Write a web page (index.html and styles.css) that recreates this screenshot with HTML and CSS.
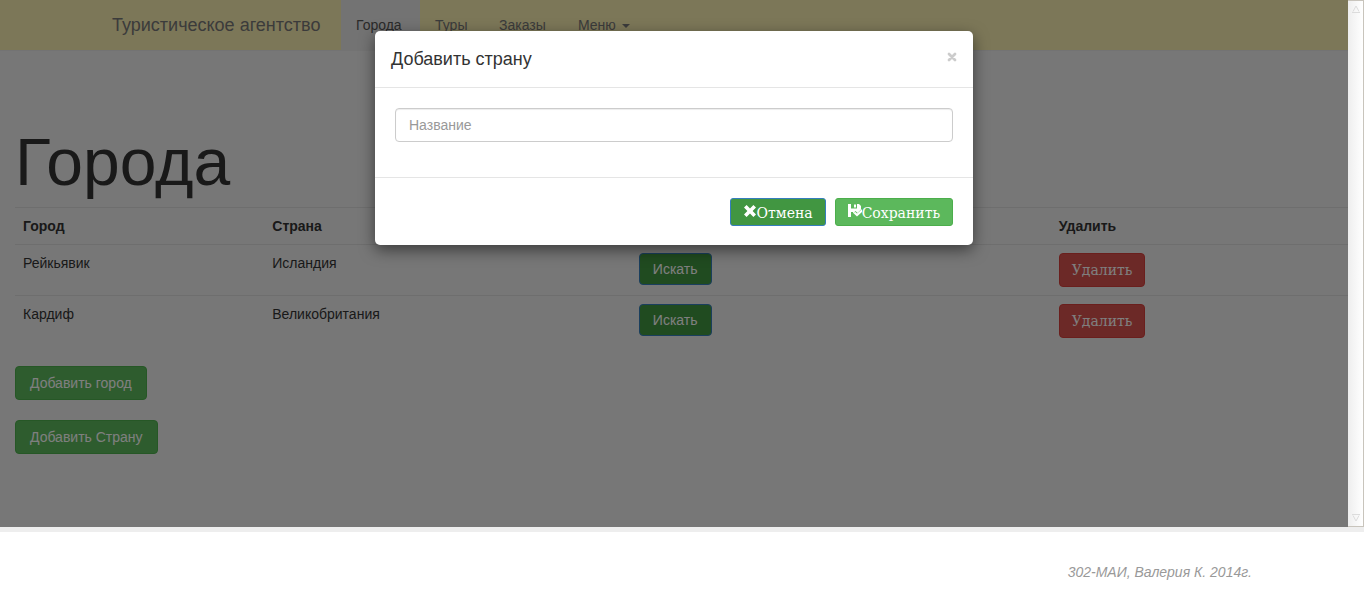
FILE: index.html
```html
<!DOCTYPE html>
<html lang="ru">
<head>
<meta charset="utf-8">
<title>Туристическое агентство</title>
<link rel="stylesheet" href="styles.css">
</head>
<body>
<div class="frame">
  <div class="page">
    <nav class="navbar">
      <a class="brand" href="#">Туристическое агентство</a>
      <a class="nav-link wide active" href="#">Города</a>
      <a class="nav-link" href="#">Туры</a>
      <a class="nav-link wide" href="#">Заказы</a>
      <a class="nav-link" href="#">Меню <span class="caret"></span></a>
    </nav>
    <main class="content">
      <h1>Города</h1>
      <table class="table">
        <colgroup><col class="col-city"><col class="col-country"><col class="col-search"><col></colgroup>
        <thead>
          <tr><th>Город</th><th>Страна</th><th></th><th>Удалить</th></tr>
        </thead>
        <tbody>
          <tr>
            <td>Рейкьявик</td><td>Исландия</td>
            <td><button class="btn search" type="button">Искать</button></td>
            <td><button class="btn danger serif" type="button">Удалить</button></td>
          </tr>
          <tr>
            <td>Кардиф</td><td>Великобритания</td>
            <td><button class="btn search" type="button">Искать</button></td>
            <td><button class="btn danger serif" type="button">Удалить</button></td>
          </tr>
        </tbody>
      </table>
      <div class="actions">
        <button class="btn success" type="button">Добавить город</button>
        <button class="btn success" type="button">Добавить Страну</button>
      </div>
    </main>
    <div class="backdrop">
      <form class="modal" role="dialog" aria-labelledby="modal-title">
        <header class="modal-header">
          <h2 id="modal-title">Добавить страну</h2>
          <button class="close" type="button" aria-label="Закрыть">
            <svg width="10" height="10" viewBox="0 0 10 10"><path d="M2 2l6 6M8 2L2 8" stroke="#ccc" stroke-width="2.8" stroke-linecap="round"/></svg>
          </button>
        </header>
        <div class="modal-body">
          <input type="text" placeholder="Название" aria-label="Название">
        </div>
        <footer class="modal-footer">
          <button class="btn small cancel serif" type="button"><svg width="14" height="14" viewBox="0 0 14 14"><path d="M3.6 2L7 5.400 10.400 2 13 4.600 9.600 8 13 11.400 10.400 14 7 10.600 3.600 14 1 11.400 4.400 8 1 4.600z" fill="#fff"/></svg>Отмена</button>
          <button class="btn small success serif" type="button"><svg width="14" height="14" viewBox="0 0 14 14"><path d="M0 1H3V5.500H9V1H11L13 3V6.500L9.500 10 7.500 8 5 10.500V9H3V14H0zM6 1.500H8V4.500H6z" fill="#fff" fill-rule="evenodd"/><path d="M6.300 9.500L9 12 14.500 7" fill="none" stroke="#fff" stroke-width="2.200"/></svg>Сохранить</button>
        </footer>
      </form>
    </div>
  </div>
  <div class="scrollbar" aria-hidden="true">
    <svg width="8" height="8" viewBox="0 0 8 8"><path d="M1 6.500L4 1l3 5.500M0 7.500h8" fill="none" stroke="#dcdcdc"/></svg>
    <svg width="8" height="8" viewBox="0 0 8 8"><path d="M1 1.500L4 7l3-5.500M0 .5h8" fill="none" stroke="#dcdcdc"/></svg>
  </div>
</div>
<footer class="credits">302-МАИ, Валерия К. 2014г.</footer>
</body>
</html>
```
FILE: styles.css
```css
* { box-sizing: border-box; }

body {
  margin: 0;
  min-height: 100vh;
  display: flex;
  flex-direction: column;
  background: #fff;
  color: #333;
  font: 14px/20px "Liberation Sans", Arial, sans-serif;
}

.frame {
  flex: 1;
  display: flex;
  border-bottom: 5px solid #eee;
}

.page {
  position: relative;
  flex: 1;
  background: #eee;
}

.navbar {
  display: flex;
  min-height: 51px;
  padding-left: 97px;
  background: #f9eeb0;
  border-bottom: 1px solid #e7e7e7;
}

.navbar a {
  padding: 15px;
  color: #777;
  text-decoration: none;
}

.navbar .brand {
  min-width: 244px;
  font-size: 18px;
}

.nav-link { min-width: 64px; }
.nav-link.wide { min-width: 79px; }

.navbar .active {
  background: #e7e7e7;
  color: #555;
}

.caret {
  display: inline-block;
  margin-left: 2px;
  vertical-align: middle;
  border-top: 4px solid;
  border-left: 4px solid transparent;
  border-right: 4px solid transparent;
}

.content { padding: 78px 0 0 15px; }

h1 {
  margin: 0 0 12px;
  font-size: 66px;
  line-height: 66px;
  font-weight: 500;
}

.table {
  width: 100%;
  table-layout: fixed;
  border-collapse: collapse;
}

.col-city { width: 18.7%; }
.col-country { width: 27.5%; }
.col-search { width: 31.5%; }

th, td {
  padding: 8px;
  border-top: 1px solid #ddd;
  text-align: left;
  vertical-align: top;
}

td .btn { display: block; }

.btn {
  padding: 6px 12px;
  border: 1px solid;
  border-radius: 4px;
  color: #fff;
  font: 14px/20px "Liberation Sans", Arial, sans-serif;
}

.btn.serif { font-family: "DejaVu Serif", serif; }

.success { background: #5cb85c; border-color: #4cae4c; }
.danger { background: #d9534f; border-color: #d43f3a; }
.search, .cancel { background: #419641; border-color: #357ebd; }
.btn.search { padding: 5px 13px; }

.actions {
  display: flex;
  flex-direction: column;
  align-items: flex-start;
  gap: 20px;
  margin-top: 20px;
}

.actions .btn { padding: 6px 14px; }

.backdrop {
  position: absolute;
  inset: 0;
  padding-top: 31px;
  background: rgba(0, 0, 0, .5);
}

.modal {
  max-width: 598px;
  margin: 0 auto;
  background: #fff;
  border-radius: 5px;
  box-shadow: 0 5px 15px rgba(0, 0, 0, .5);
}

.modal-header {
  display: flex;
  justify-content: space-between;
  align-items: flex-start;
  padding: 15px 16px;
  border-bottom: 1px solid #e5e5e5;
}

.modal h2 {
  margin: 0;
  font-size: 18px;
  line-height: 26px;
  font-weight: 500;
}

.close {
  display: flex;
  margin-top: 6px;
  padding: 0;
  border: 0;
  background: none;
}

.modal-body { padding: 20px 20px 35px; }

.modal-body input {
  display: block;
  width: 100%;
  height: 34px;
  padding: 6px 13px;
  border: 1px solid #ccc;
  border-radius: 4px;
  background: #fff;
  box-shadow: inset 0 1px 1px rgba(0, 0, 0, .075);
  color: #555;
  font: inherit;
}

.modal-body input::placeholder { color: #999; opacity: 1; }

.modal-footer {
  display: flex;
  justify-content: flex-end;
  gap: 9px;
  padding: 20px 20px 19px;
  border-top: 1px solid #e5e5e5;
}

.btn.small {
  display: flex;
  height: 28px;
  padding: 4px 12px;
  border-radius: 3px;
}

.scrollbar {
  display: flex;
  flex-direction: column;
  justify-content: space-between;
  align-items: center;
  width: 16px;
  padding: 4px 0;
  background: linear-gradient(90deg, #eee, #fff);
  border: 1px solid #c8c4bc;
  border-left: 0;
}

.credits {
  padding: 30px 112px 10px;
  color: #999;
  font-style: italic;
  text-align: right;
}
```
